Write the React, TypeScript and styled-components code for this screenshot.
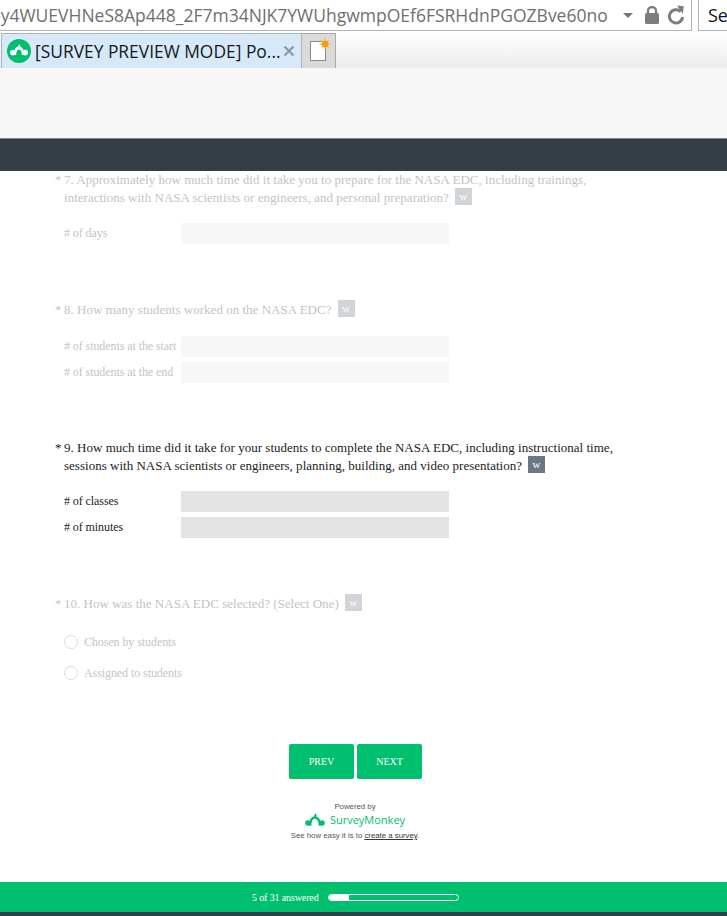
import React from "react";
import styled, { createGlobalStyle } from "styled-components";

const Global = createGlobalStyle`
  html, body { margin: 0; padding: 0; background: #fff; }
  body { overflow: hidden; }
  * { box-sizing: border-box; }
`;

const Page = styled.div`
  width: 727px;
  height: 916px;
  display: flex;
  flex-direction: column;
  overflow: hidden;
  background: #fff;
`;

const AddressRow = styled.div`
  height: 31px;
  flex: none;
  display: flex;
  align-items: stretch;
  background: #fff;
`;

const AddressBox = styled.div`
  width: 692px;
  flex: none;
  display: flex;
  align-items: center;
  border-right: 1px solid #b4b4b4;
  border-bottom: 1px solid #b4b4b4;
  overflow: hidden;
`;

const UrlText = styled.span`
  width: 623px;
  flex: none;
  margin-left: -5px;
  font: 17.5px/30px "Open Sans", sans-serif;
  color: #6f6f6f;
  white-space: nowrap;
`;

const Caret = styled.span`
  flex: none;
  margin-left: 5px;
  width: 0;
  height: 0;
  border-left: 5px solid transparent;
  border-right: 5px solid transparent;
  border-top: 5px solid #777;
`;

const ToolIcon = styled.svg<{ $gap: number }>`
  flex: none;
  display: block;
  margin-left: ${(p) => p.$gap}px;
`;

const SearchBox = styled.div`
  margin-left: 6px;
  flex: 1;
  padding-left: 9px;
  border-left: 1px solid #b4b4b4;
  border-bottom: 1px solid #b4b4b4;
  font: 18px/30px "Open Sans", sans-serif;
  color: #111;
`;

const TabRow = styled.div`
  height: 37px;
  flex: none;
  display: flex;
  align-items: flex-end;
  padding-left: 1px;
  background: linear-gradient(#ffffff, #ececec);
`;

const ActiveTab = styled.div`
  width: 301px;
  height: 35px;
  display: flex;
  align-items: center;
  padding-left: 5px;
  background: #d7e9f9;
  border: 1px solid #a9b4bd;
  border-bottom: 0;
`;

const TabTitle = styled.span`
  margin-left: 4px;
  width: 243px;
  flex: none;
  font: 17.4px/30px "Open Sans", sans-serif;
  color: #15181b;
  white-space: nowrap;
`;

const NewTab = styled.div`
  width: 34px;
  height: 35px;
  display: flex;
  align-items: flex-start;
  background: #dadada;
  border: 1px solid #a9a9a9;
  border-left: 0;
  border-bottom: 0;
`;

const ContentHeader = styled.div`
  height: 71px;
  flex: none;
  background: #f7f7f7;
  border-bottom: 1px solid #7f858a;
`;

const DarkBar = styled.div`
  height: 32px;
  flex: none;
  background: #343e47;
`;

const Survey = styled.main`
  flex: 1;
  padding-left: 55px;
  font-family: "Liberation Serif", serif;
`;

const Question = styled.section<{ $dim?: boolean; $gap?: number }>`
  margin-top: ${(p) => p.$gap ?? 57}px;
  width: 590px;
  color: ${(p) => (p.$dim ? "#c4c4c4" : "#1c1c1c")};
`;

const Title = styled.div`
  display: flex;
  font-size: 13px;
  line-height: 18px;
  letter-spacing: 0.015px;
`;

const Star = styled.span`
  width: 9px;
  flex: none;
`;

const Badge = styled.span<{ $dim?: boolean }>`
  display: inline-block;
  width: 17px;
  height: 17px;
  margin: -4px 0 -4px 6px;
  vertical-align: 2px;
  text-align: center;
  font: 11px/16px "Liberation Serif", serif;
  color: #fff;
  background: ${(p) => (p.$dim ? "#d2d5d8" : "#6b7883")};
`;

const Rows = styled.div<{ $top?: number }>`
  margin-top: ${(p) => p.$top ?? 16}px;
  padding-left: 9px;
  display: flex;
  flex-direction: column;
  gap: 5px;
`;

const Row = styled.div`
  display: flex;
  align-items: center;
  height: 21px;
  font-size: 12px;
  letter-spacing: -0.08px;
`;

const RowLabel = styled.span`
  width: 117px;
  flex: none;
`;

const Field = styled.div<{ $dim?: boolean }>`
  width: 268px;
  height: 21px;
  background: ${(p) => (p.$dim ? "#f7f7f7" : "#e3e3e3")};
`;

const Choices = styled.div`
  margin-top: 20px;
  padding-left: 9px;
  display: flex;
  flex-direction: column;
  gap: 13px;
`;

const Choice = styled.div`
  display: flex;
  align-items: center;
  gap: 6px;
  height: 18px;
  font-size: 12px;
  letter-spacing: -0.08px;
`;

const Radio = styled.span`
  width: 14px;
  height: 14px;
  flex: none;
  border: 1px solid #dcdcdc;
  border-radius: 50%;
`;

const Buttons = styled.div`
  margin: 62px 0 0 234px;
  display: flex;
  gap: 3px;
`;

const NavButton = styled.div`
  width: 65px;
  height: 35px;
  display: flex;
  align-items: center;
  justify-content: center;
  background: #00bf6f;
  border-radius: 2px;
  color: #fff;
  font-size: 10px;
`;

const Powered = styled.div`
  margin: 23px 0 0 236px;
  width: 128px;
  display: flex;
  flex-direction: column;
  align-items: center;
  font: 7.8px/10px "Liberation Sans", sans-serif;
  color: #50565c;
`;

const Brand = styled.div`
  display: flex;
  align-items: center;
  gap: 5px;
  height: 16px;
  font: 500 11px/16px "Open Sans", sans-serif;
  color: #00bf6f;
`;

const Pitch = styled.div`
  margin-top: 3px;
  white-space: nowrap;
  a { color: #2f363c; text-decoration: underline; }
`;

const ProgressBar = styled.footer`
  height: 30px;
  flex: none;
  display: flex;
  align-items: center;
  padding-left: 252px;
  gap: 9px;
  background: #00bf6f;
  color: #fff;
  font: 10px "Liberation Serif", serif;
  letter-spacing: -0.13px;
`;

const Track = styled.div`
  width: 131px;
  height: 7px;
  border: 1px solid #fff;
  border-radius: 4px;
  overflow: hidden;
`;

const Fill = styled.div`
  height: 100%;
  background: #fff;
`;

const BottomEdge = styled.div`
  height: 4px;
  flex: none;
  background: #343e47;
`;

const CloseMark = styled.svg`
  flex: none;
  margin-left: 5px;
  display: block;
`;

const IconSvg = styled.svg`
  display: block;
  flex: none;
`;

const Monkey = ({ size, color }: { size: number; color: string }) => (
  <IconSvg width={size} height={size * 0.72} viewBox="0 0 25 18">
    <path d="M6.5 16 C6.5 9 9 5.8 12.5 5.8 C16 5.8 18.5 9 18.5 16" fill="none" stroke={color} strokeWidth="3" />
    <circle cx="3.6" cy="12.5" r="3.4" fill={color} />
    <circle cx="21.4" cy="12.5" r="3.4" fill={color} />
    <path d="M11 6 C10.8 3.6 11.8 1.4 14.6 0.4 C14 2.4 14.2 4.2 14.8 6 Z" fill={color} />
  </IconSvg>
);

const PaperIcon = styled(IconSvg)`
  margin: 1px 0 0 3px;
`;

export default function App() {
  return (
    <Page>
      <Global />
      <AddressRow>
        <AddressBox>
          <UrlText>-y4WUEVHNeS8Ap448_2F7m34NJK7YWUhgwmpOEf6FSRHdnPGOZBve60no</UrlText>
          <Caret />
          <ToolIcon $gap={11} width="16" height="20" viewBox="0 0 16 20">
            <path d="M4 9V6a4 4 0 0 1 8 0v3" fill="none" stroke="#7d7d7d" strokeWidth="2.4" />
            <rect x="1" y="8" width="14" height="11" rx="1.5" fill="#7d7d7d" />
          </ToolIcon>
          <ToolIcon $gap={7} width="18" height="20" viewBox="0 0 18 20">
            <path d="M13.6 6.6A6.6 6.6 0 1 0 15.6 12" fill="none" stroke="#7d7d7d" strokeWidth="3" />
            <path d="M10 0.5 L16.8 1.2 L15.8 9 Z" fill="#7d7d7d" />
          </ToolIcon>
        </AddressBox>
        <SearchBox>Se</SearchBox>
      </AddressRow>

      <TabRow>
        <ActiveTab>
          <IconSvg width="24" height="24" viewBox="0 0 24 24">
            <circle cx="12" cy="12" r="12" fill="#00bf6f" />
            <path d="M7 16 C7 10 9 7.5 12 7.5 C15 7.5 17 10 17 16 L14.8 16 C14.8 12.8 13.8 10.6 12 10.6 C10.2 10.6 9.2 12.8 9.2 16 Z" fill="#fff" />
            <circle cx="5.8" cy="13.6" r="2.8" fill="#fff" />
            <circle cx="18.2" cy="13.6" r="2.8" fill="#fff" />
            <path d="M10.8 8 L12.2 5 L13.6 8 Z" fill="#fff" />
          </IconSvg>
          <TabTitle>[SURVEY PREVIEW MODE] Po...</TabTitle>
          <CloseMark width="12" height="12" viewBox="0 0 12 12">
            <path d="M1.5 1.5 L10.5 10.5 M10.5 1.5 L1.5 10.5" stroke="#8f979e" strokeWidth="2.2" />
          </CloseMark>
        </ActiveTab>
        <NewTab>
          <PaperIcon width="30" height="30" viewBox="0 0 30 30">
            <rect x="5.5" y="6.5" width="15" height="19" fill="#fff" stroke="#8a8a8a" />
            <path d="M20 3.5v11M14.5 9h11M16.5 5.5l7 7M23.5 5.5l-7 7" stroke="#fbb92f" strokeWidth="1.4" />
            <circle cx="20" cy="9" r="3.2" fill="#f59a13" />
          </PaperIcon>
        </NewTab>
      </TabRow>

      <ContentHeader />
      <DarkBar />

      <Survey>
        <Question $dim $gap={0}>
          <Title>
            <Star>*</Star>
            <span>
              7. Approximately how much time did it take you to prepare for the NASA EDC, including trainings,
              interactions with NASA scientists or engineers, and personal preparation?
              <Badge $dim>w</Badge>
            </span>
          </Title>
          <Rows>
            <Row>
              <RowLabel># of days</RowLabel>
              <Field $dim />
            </Row>
          </Rows>
        </Question>

        <Question $dim>
          <Title>
            <Star>*</Star>
            <span>
              8. How many students worked on the NASA EDC?
              <Badge $dim>w</Badge>
            </span>
          </Title>
          <Rows $top={17}>
            <Row>
              <RowLabel># of students at the start</RowLabel>
              <Field $dim />
            </Row>
            <Row>
              <RowLabel># of students at the end</RowLabel>
              <Field $dim />
            </Row>
          </Rows>
        </Question>

        <Question $gap={56}>
          <Title>
            <Star>*</Star>
            <span>
              9. How much time did it take for your students to complete the NASA EDC, including instructional time,
              sessions with NASA scientists or engineers, planning, building, and video presentation?
              <Badge>w</Badge>
            </span>
          </Title>
          <Rows>
            <Row>
              <RowLabel># of classes</RowLabel>
              <Field />
            </Row>
            <Row>
              <RowLabel># of minutes</RowLabel>
              <Field />
            </Row>
          </Rows>
        </Question>

        <Question $dim>
          <Title>
            <Star>*</Star>
            <span>
              10. How was the NASA EDC selected? (Select One)
              <Badge $dim>w</Badge>
            </span>
          </Title>
          <Choices>
            <Choice>
              <Radio />
              <span>Chosen by students</span>
            </Choice>
            <Choice>
              <Radio />
              <span>Assigned to students</span>
            </Choice>
          </Choices>
        </Question>

        <Buttons>
          <NavButton>PREV</NavButton>
          <NavButton>NEXT</NavButton>
        </Buttons>

        <Powered>
          <span>Powered by</span>
          <Brand>
            <Monkey size={20} color="#00bf6f" />
            <span>SurveyMonkey</span>
          </Brand>
          <Pitch>
            See how easy it is to <a>create a survey</a>.
          </Pitch>
        </Powered>
      </Survey>

      <ProgressBar>
        <span>5 of 31 answered</span>
        <Track>
          <Fill style={{ width: `${(5 / 31) * 100}%` }} />
        </Track>
      </ProgressBar>
      <BottomEdge />
    </Page>
  );
}
